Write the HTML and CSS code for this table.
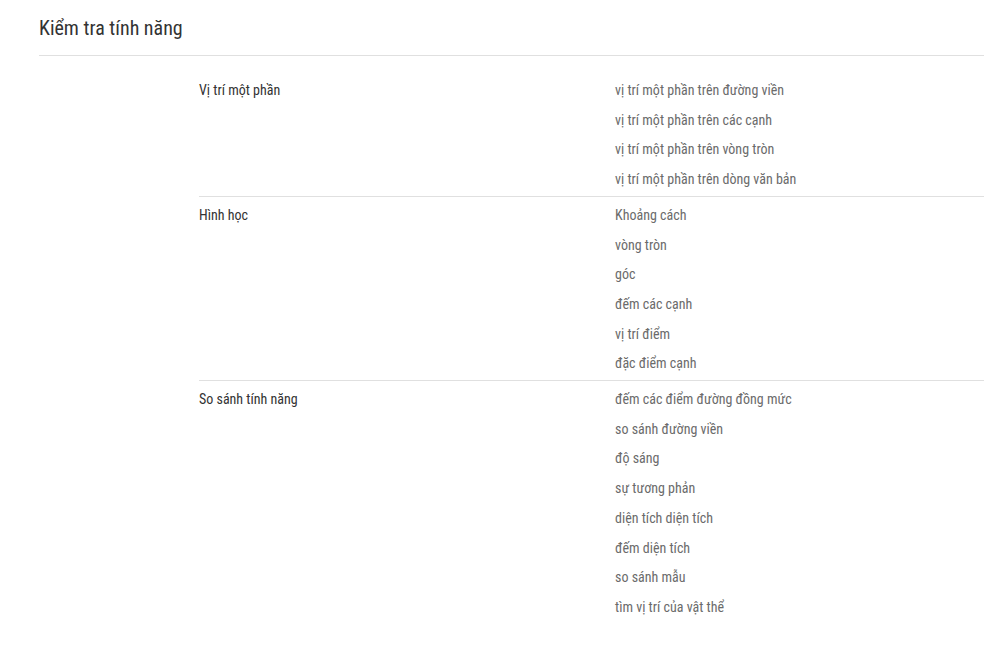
FILE: index.html
```html
<!DOCTYPE html>
<html lang="vi">
<head>
    <meta charset="UTF-8">
    <meta name="viewport" content="width=device-width, initial-scale=1.0">
    <title>Kiểm tra tính năng</title>
    <link rel="stylesheet" href="styles.css">
</head>
<body>
    <div class="page">
        <div class="page-header">
            <h1 class="title">Kiểm tra tính năng</h1>
        </div>

        <div class="features">
            <!-- Vị trí một phần -->
            <div class="feature-row">
                <div class="feature-name">Vị trí một phần</div>
                <ul class="feature-items">
                    <li>vị trí một phần trên đường viền</li>
                    <li>vị trí một phần trên các cạnh</li>
                    <li>vị trí một phần trên vòng tròn</li>
                    <li>vị trí một phần trên dòng văn bản</li>
                </ul>
            </div>

            <!-- Hình học -->
            <div class="feature-row">
                <div class="feature-name">Hình học</div>
                <ul class="feature-items">
                    <li>Khoảng cách</li>
                    <li>vòng tròn</li>
                    <li>góc</li>
                    <li>đếm các cạnh</li>
                    <li>vị trí điểm</li>
                    <li>đặc điểm cạnh</li>
                </ul>
            </div>

            <!-- So sánh tính năng -->
            <div class="feature-row">
                <div class="feature-name">So sánh tính năng</div>
                <ul class="feature-items">
                    <li>đếm các điểm đường đồng mức</li>
                    <li>so sánh đường viền</li>
                    <li>độ sáng</li>
                    <li>sự tương phản</li>
                    <li>diện tích diện tích</li>
                    <li>đếm diện tích</li>
                    <li>so sánh mẫu</li>
                    <li>tìm vị trí của vật thể</li>
                </ul>
            </div>
        </div>
    </div>
</body>
</html>
```

FILE: styles.css
```css
* {
    margin: 0;
    padding: 0;
    box-sizing: border-box;
}

:root {
    --text: #333333;
    --label: #333333;
    --muted: #6b6b6b;
    --border: #e0e0e0;
}

body {
    font-family: "Roboto Condensed", Roboto, "Noto Sans", Arial, sans-serif;
    font-stretch: condensed;
    font-size: 14px;
    color: var(--text);
    background: #ffffff;
}

.page {
    padding-left: 39px;
}

.page-header {
    padding-top: 14px;
    padding-bottom: 13px;
    border-bottom: 1px solid var(--border);
}

.title {
    font-size: 20px;
    font-weight: 400;
    line-height: 28px;
    color: var(--text);
}

.features {
    margin-top: 16px;
    padding-left: 160px;
}

.feature-row {
    display: grid;
    grid-template-columns: 416px 1fr;
    padding: 4px 0 1px;
    border-bottom: 1px solid var(--border);
}

.feature-row:last-child {
    border-bottom: none;
}

.feature-name {
    line-height: 29.7px;
    color: var(--label);
}

.feature-items {
    list-style: none;
    color: var(--muted);
}

.feature-items li {
    line-height: 29.7px;
}
```
